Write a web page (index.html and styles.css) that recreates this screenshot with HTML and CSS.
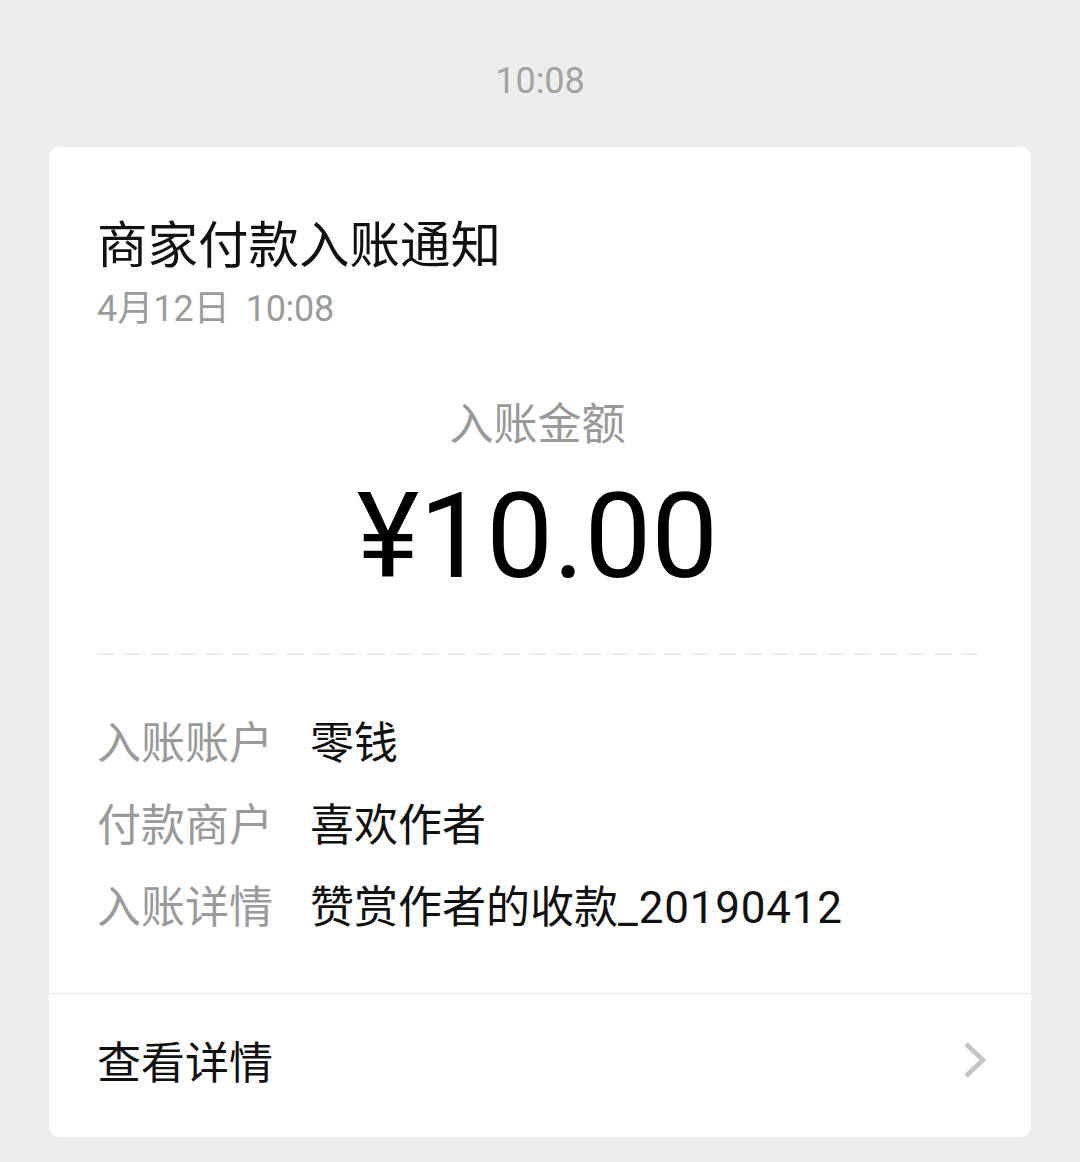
FILE: index.html
```html
<!DOCTYPE html>
<html lang="zh-CN">
<head>
<meta charset="utf-8">
<title>商家付款入账通知</title>
<link rel="stylesheet" href="styles.css">
</head>
<body>
  <div class="time">10:08</div>
  <div class="card">
    <div class="body">
      <div class="title">商家付款入账通知</div>
      <div class="date">4月12日<span class="clock">10:08</span></div>
      <div class="amount-label">入账金额</div>
      <div class="amount">¥10.00</div>
      <div class="dash"></div>
      <div class="rows">
        <div class="row"><span class="label">入账账户</span><span class="value">零钱</span></div>
        <div class="row"><span class="label">付款商户</span><span class="value">喜欢作者</span></div>
        <div class="row"><span class="label">入账详情</span><span class="value">赞赏作者的收款<span class="num">_20190412</span></span></div>
      </div>
    </div>
    <div class="footer">
      <span class="more">查看详情</span>
      <svg class="chev" width="24" height="36" viewBox="0 0 24 36"><path d="M3 2 L20 18 L3 34" fill="none" stroke="#c4c4c4" stroke-width="4.6"/></svg>
    </div>
  </div>
</body>
</html>
```

FILE: styles.css
```css
html, body {
  margin: 0;
  padding: 0;
}
body {
  background: #ededed;
  font-family: Roboto, "Noto Sans CJK SC", sans-serif;
  width: 1080px;
  height: 1162px;
  overflow: hidden;
}
.time {
  padding: 54px 0 39px;
  line-height: 54px;
  font-size: 36px;
  color: #a2a2a2;
  text-align: center;
}
.card {
  margin-left: 49px;
  width: 982px;
  height: 990px;
  background: #ffffff;
  border-radius: 10px;
  display: flex;
  flex-direction: column;
}
.body {
  padding: 69px 53px 48px 48px;
}
.title {
  font-size: 50.5px;
  line-height: 60px;
  color: #111;
}
.date {
  margin-top: 8px;
  font-size: 36px;
  line-height: 50px;
  color: #9b9b9b;
}
.clock {
  margin-left: 16px;
  letter-spacing: -0.3px;
}
.amount-label {
  margin-top: 61px;
  text-align: center;
  font-size: 44px;
  line-height: 60px;
  color: #999;
}
.amount {
  margin-top: 17px;
  text-align: center;
  font-size: 119px;
  line-height: 130px;
  color: #000;
}
.dash {
  margin-top: 51px;
  height: 2px;
  background: repeating-linear-gradient(to right, #ececec 0 18px, transparent 18px 27px);
}
.rows {
  margin-top: 44px;
}
.row {
  display: flex;
  align-items: center;
  height: 82px;
  font-size: 44px;
}
.label {
  width: 213px;
  color: #9a9a9a;
}
.value {
  color: #111;
}
.num {
  letter-spacing: 0.8px;
}
.footer {
  flex: 1;
  border-top: 1px solid #e6e6e6;
  display: flex;
  align-items: center;
  justify-content: space-between;
  padding: 0 44px 12px 48px;
}
.more {
  font-size: 44px;
  color: #111;
}
.chev {
  display: block;
}
```
